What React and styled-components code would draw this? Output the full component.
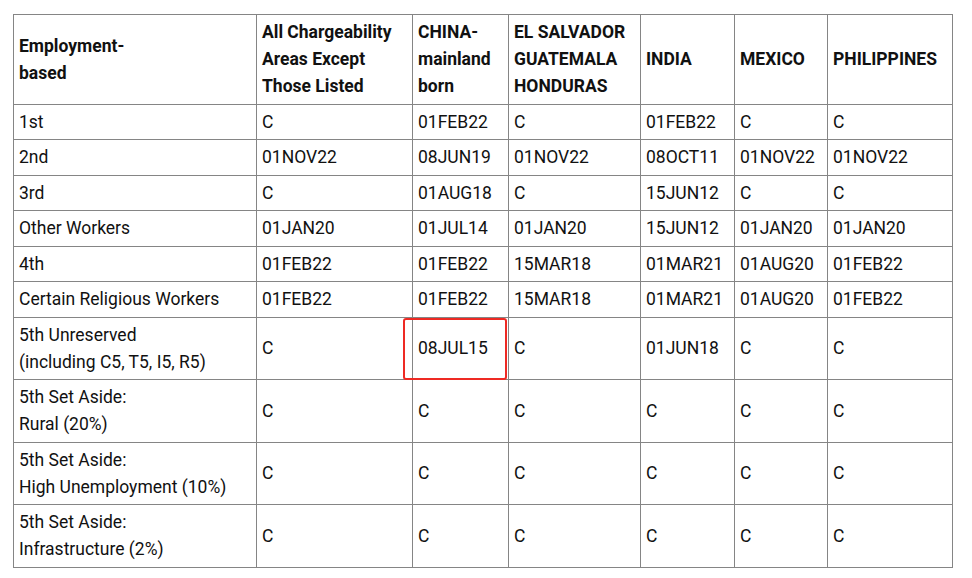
import React from "react";
import styled, { createGlobalStyle } from "styled-components";

const Global = createGlobalStyle`
  html, body { margin: 0; padding: 0; background: #fff; }
  body { font-family: Roboto, "Liberation Sans", Arial, sans-serif; color: #111; }
`;

const Page = styled.div`
  padding: 14px 0 0 13px;
`;

const Table = styled.table`
  border-collapse: collapse;
  table-layout: fixed;
  width: 939px;
  font-size: 17.5px;
  line-height: 27px;
`;

const Cell = styled.td`
  border: 1px solid #858585;
  padding: 4px 5px 3.5px 5px;
  vertical-align: middle;
  text-align: left;
  font-weight: ${(p) => (p.$head ? 700 : 400)};
  position: relative;
  &::after {
    content: ${(p) => (p.$mark ? '""' : "none")};
    position: absolute;
    left: -10px;
    right: 1px;
    top: 0px;
    bottom: -1px;
    border: 2px solid #ee2a24;
    border-radius: 3px;
    pointer-events: none;
  }
`;

const widths = [243, 156, 96, 132, 94, 93, 125];

const header = [
  ["Employment-", "based"],
  ["All Chargeability", "Areas Except", "Those Listed"],
  ["CHINA-", "mainland", "born"],
  ["EL SALVADOR", "GUATEMALA", "HONDURAS"],
  ["INDIA"],
  ["MEXICO"],
  ["PHILIPPINES"],
];

const rows = [
  [["1st"], "C", "01FEB22", "C", "01FEB22", "C", "C"],
  [["2nd"], "01NOV22", "08JUN19", "01NOV22", "08OCT11", "01NOV22", "01NOV22"],
  [["3rd"], "C", "01AUG18", "C", "15JUN12", "C", "C"],
  [["Other Workers"], "01JAN20", "01JUL14", "01JAN20", "15JUN12", "01JAN20", "01JAN20"],
  [["4th"], "01FEB22", "01FEB22", "15MAR18", "01MAR21", "01AUG20", "01FEB22"],
  [["Certain Religious Workers"], "01FEB22", "01FEB22", "15MAR18", "01MAR21", "01AUG20", "01FEB22"],
  [["5th Unreserved", "(including C5, T5, I5, R5)"], "C", "08JUL15", "C", "01JUN18", "C", "C"],
  [["5th Set Aside:", "Rural (20%)"], "C", "C", "C", "C", "C", "C"],
  [["5th Set Aside:", "High Unemployment (10%)"], "C", "C", "C", "C", "C", "C"],
  [["5th Set Aside:", "Infrastructure (2%)"], "C", "C", "C", "C", "C", "C"],
];

const Lines = ({ lines }) =>
  lines.map((l, i) => (
    <React.Fragment key={i}>
      {i > 0 && <br />}
      {l}
    </React.Fragment>
  ));

export default function App() {
  return (
    <>
      <Global />
      <Page>
        <Table>
          <colgroup>
            {widths.map((w, i) => (
              <col key={i} style={{ width: w }} />
            ))}
          </colgroup>
          <thead>
            <tr>
              {header.map((h, i) => (
                <Cell as="th" key={i} $head>
                  <Lines lines={h} />
                </Cell>
              ))}
            </tr>
          </thead>
          <tbody>
            {rows.map((r, ri) => (
              <tr key={ri}>
                <Cell>
                  <Lines lines={r[0]} />
                </Cell>
                {r.slice(1).map((v, ci) => (
                  <Cell key={ci} $mark={ri === 6 && ci === 1}>
                    {v}
                  </Cell>
                ))}
              </tr>
            ))}
          </tbody>
        </Table>
      </Page>
    </>
  );
}
